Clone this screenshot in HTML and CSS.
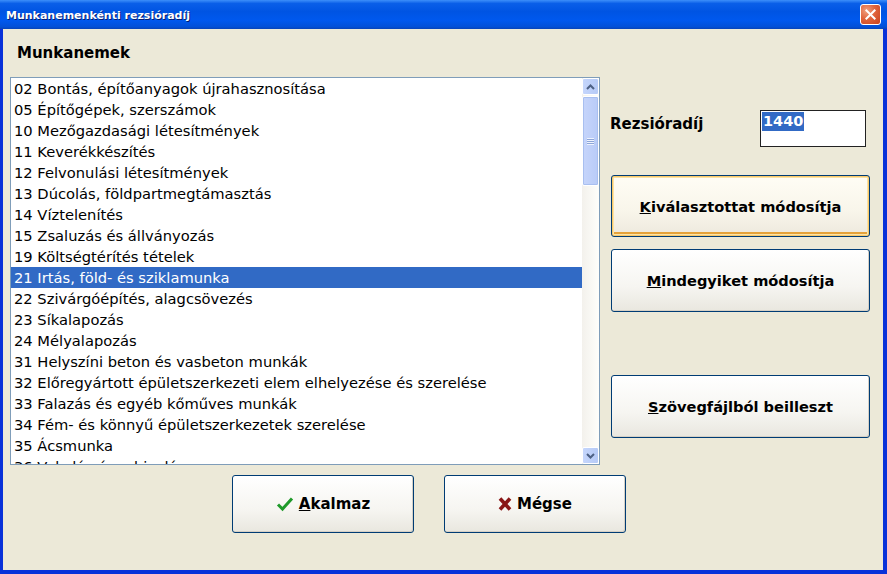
FILE: index.html
```html
<!DOCTYPE html>
<html lang="hu">
<head>
    <meta charset="UTF-8">
    <title>Munkanemenkénti rezsióradíj</title>
    <link rel="stylesheet" href="styles.css">
</head>
<body>
    <div class="window">
        <div class="titlebar">
            <span class="title">Munkanemenkénti rezsióradíj</span>
            <span class="close-btn">
                <svg width="21" height="21" viewBox="0 0 21 21">
                    <path d="M6 6 L15 15 M15 6 L6 15" stroke="#fff" stroke-width="2.2" stroke-linecap="square"/>
                </svg>
            </span>
        </div>
        <div class="client">
            <div class="left">
                <div class="section-label">Munkanemek</div>
                <div class="listbox">
                    <ul class="items">
                        <li>02 Bontás, építőanyagok újrahasznosítása</li>
                        <li>05 Építőgépek, szerszámok</li>
                        <li>10 Mezőgazdasági létesítmények</li>
                        <li>11 Keverékkészítés</li>
                        <li>12 Felvonulási létesítmények</li>
                        <li>13 Dúcolás, földpartmegtámasztás</li>
                        <li>14 Víztelenítés</li>
                        <li>15 Zsaluzás és állványozás</li>
                        <li>19 Költségtérítés tételek</li>
                        <li class="selected">21 Irtás, föld- és sziklamunka</li>
                        <li>22 Szivárgóépítés, alagcsövezés</li>
                        <li>23 Síkalapozás</li>
                        <li>24 Mélyalapozás</li>
                        <li>31 Helyszíni beton és vasbeton munkák</li>
                        <li>32 Előregyártott épületszerkezeti elem elhelyezése és szerelése</li>
                        <li>33 Falazás és egyéb kőműves munkák</li>
                        <li>34 Fém- és könnyű épületszerkezetek szerelése</li>
                        <li>35 Ácsmunka</li>
                        <li>36 Vakolás és rabicolás</li>
                    </ul>
                    <div class="scrollbar">
                        <div class="sb-btn">
                            <svg width="9" height="6" viewBox="0 0 9 6"><path d="M1 5 L4.5 1.5 L8 5" fill="none" stroke="#4d6185" stroke-width="2"/></svg>
                        </div>
                        <div class="sb-track">
                            <div class="sb-thumb">
                                <span class="grip"></span>
                            </div>
                        </div>
                        <div class="sb-btn">
                            <svg width="9" height="6" viewBox="0 0 9 6"><path d="M1 1 L4.5 4.5 L8 1" fill="none" stroke="#4d6185" stroke-width="2"/></svg>
                        </div>
                    </div>
                </div>
                <div class="actions">
                    <div class="btn btn-small">
                        <svg width="18" height="16" viewBox="0 0 18 16"><path d="M2 8.5 L6.5 13 L16 2.5" fill="none" stroke="#1f9a2a" stroke-width="3"/></svg>
                        <span><u>A</u>kalmaz</span>
                    </div>
                    <div class="btn btn-small">
                        <svg width="14" height="16" viewBox="0 0 14 16"><path d="M2 2.5 L12 13.5 M12 2.5 L2 13.5" stroke="#8a1616" stroke-width="3.6"/></svg>
                        <span>Mégse</span>
                    </div>
                </div>
            </div>
            <div class="right">
                <div class="rate-row">
                    <label class="rate-label">Rezsióradíj</label>
                    <div class="rate-input"><span class="sel">1440</span></div>
                </div>
                <div class="btn btn-wide focused"><span><u>K</u>iválasztottat módosítja</span></div>
                <div class="btn btn-wide second"><span><u>M</u>indegyiket módosítja</span></div>
                <div class="btn btn-wide third"><span><u>S</u>zövegfájlból beilleszt</span></div>
            </div>
        </div>
    </div>
</body>
</html>
```

FILE: styles.css
```css
body {
    margin: 0;
    background: #ece9d8;
}
.window {
    width: 887px;
    height: 574px;
    display: flex;
    flex-direction: column;
    background: #0831d9;
    box-sizing: border-box;
}
.titlebar {
    height: 29px;
    display: flex;
    align-items: center;
    justify-content: space-between;
    padding: 0 6px 0 6px;
    background: linear-gradient(#3d8ffa 0%, #0a5fe8 12%, #0054e3 40%, #0058ee 70%, #0250d8 92%, #0843b8 100%);
}
.title {
    color: #fff;
    font-family: "DejaVu Sans", Verdana, sans-serif;
    font-weight: bold;
    font-size: 11px;
    text-shadow: 1px 1px 0 #0a1e6e;
    margin-top: 1px;
}
.close-btn {
    width: 21px;
    height: 21px;
    border: 1px solid #fff;
    border-radius: 3px;
    background: radial-gradient(circle at 30% 30%, #f0a080 0%, #e0643c 45%, #c8401c 100%);
    box-sizing: border-box;
    display: flex;
    align-items: center;
    justify-content: center;
}
.close-btn svg {
    width: 19px;
    height: 19px;
}
.client {
    flex: 1;
    margin: 0 4px 4px 3px;
    background: #ece9d8;
    display: flex;
}
.left {
    width: 597px;
    flex-shrink: 0;
    padding-left: 7px;
    box-sizing: border-box;
}
.section-label {
    padding-top: 15px;
    padding-left: 7px;
    height: 18px;
    line-height: 18px;
    font-family: "DejaVu Sans", Verdana, sans-serif;
    font-weight: bold;
    font-size: 15px;
    color: #000;
}
.listbox {
    margin-top: 15px;
    width: 590px;
    height: 388px;
    border: 1px solid #7f9db9;
    box-sizing: border-box;
    background: #fff;
    display: flex;
    overflow: hidden;
}
.items {
    list-style: none;
    margin: 0;
    padding: 0;
    flex: 1;
    overflow: hidden;
}
.items li {
    height: 21px;
    line-height: 21px;
    padding-left: 3px;
    font-family: "DejaVu Sans", Verdana, sans-serif;
    font-size: 14.7px;
    color: #000;
    white-space: nowrap;
}
.items li.selected {
    background: #316ac5;
    color: #fff;
}
.scrollbar {
    width: 17px;
    flex-shrink: 0;
    display: flex;
    flex-direction: column;
    background: linear-gradient(to right, #f3f1ec, #fefefb);
}
.sb-btn {
    height: 17px;
    box-sizing: border-box;
    border: 1px solid #fff;
    border-radius: 2px;
    background: linear-gradient(to right, #c5d6fc, #b6caf6);
    display: flex;
    align-items: center;
    justify-content: center;
}
.sb-track {
    flex: 1;
    padding-top: 1px;
}
.sb-thumb {
    height: 90px;
    box-sizing: border-box;
    border: 1px solid #fff;
    border-radius: 2px;
    background: linear-gradient(to right, #c6d5fb, #b8cbf7);
    box-shadow: inset 0 0 0 1px #a8bff0;
    display: flex;
    align-items: center;
    justify-content: center;
}
.grip {
    width: 7px;
    height: 7px;
    background: repeating-linear-gradient(#eef3fe 0, #eef3fe 1px, #8ca5d8 1px, #8ca5d8 2px);
}
.actions {
    margin-top: 10px;
    padding-left: 222px;
    display: flex;
    gap: 30px;
}
.btn {
    box-sizing: border-box;
    border: 1px solid #003c74;
    border-radius: 3px;
    background: linear-gradient(#ffffff 0%, #f6f5f1 60%, #e9e7df 100%);
    box-shadow: inset -1px -1px 0 #d6d0c5;
    display: flex;
    align-items: center;
    justify-content: center;
    color: #000;
    flex-shrink: 0;
}
.btn-small {
    width: 182px;
    height: 58px;
    gap: 5px;
    font-family: "DejaVu Sans", Verdana, sans-serif;
    font-weight: bold;
    font-size: 15px;
}
.right {
    margin-left: 10px;
    width: 260px;
}
.rate-row {
    margin-top: 81px;
    display: flex;
    align-items: flex-start;
}
.rate-label {
    width: 150px;
    padding-top: 5px;
    font-family: "DejaVu Sans", Verdana, sans-serif;
    font-weight: bold;
    font-size: 15px;
}
.rate-input {
    width: 106px;
    height: 37px;
    border: 1px solid #222;
    box-sizing: border-box;
    background: #fff;
    padding: 1px 0 0 1px;
}
.sel {
    display: inline-block;
    background: #316ac5;
    color: #fff;
    font-family: "DejaVu Sans", Verdana, sans-serif;
    font-weight: bold;
    font-size: 14.5px;
    line-height: 19px;
    padding: 0 1px;
}
.btn-wide {
    width: 259px;
    height: 62px;
    margin-left: 1px;
    font-family: "DejaVu Sans", Verdana, sans-serif;
    font-weight: bold;
    font-size: 14.6px;
}
.focused {
    margin-top: 28px;
    box-shadow: inset 0 0 0 1px #f9c96a, inset 0 0 0 2px #fbe3a6, inset 0 -2px 0 2px #e5a23a;
    background: linear-gradient(#fffdf5 0%, #f8f5ea 60%, #ede9dd 100%);
}
.second {
    margin-top: 12px;
    height: 63px;
}
.third {
    margin-top: 63px;
    height: 63px;
}
```
